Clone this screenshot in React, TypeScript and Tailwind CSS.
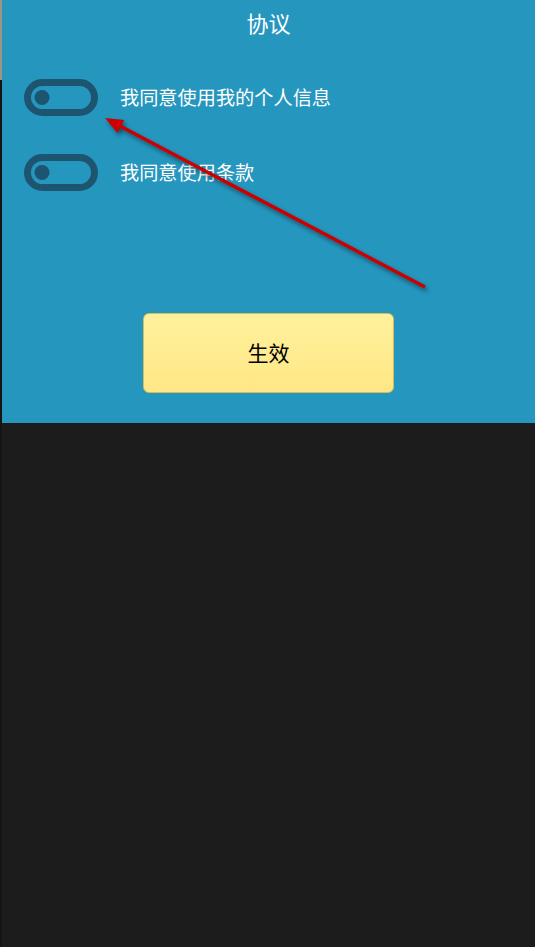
import React from "react";

function Toggle() {
  return (
    <svg width="74" height="37" viewBox="0 0 74 37" className="shrink-0">
      <rect x="3.5" y="3.5" width="67" height="30" rx="15" fill="none" stroke="#1d5570" strokeWidth="7" />
      <circle cx="18" cy="18.5" r="7.5" fill="#1d5570" />
    </svg>
  );
}

function Row({ label }: { label: string }) {
  return (
    <div className="flex items-center h-[37px] pl-[22px]">
      <Toggle />
      <span className="ml-[22px] text-[19.2px] text-white leading-none">{label}</span>
    </div>
  );
}

export default function App() {
  return (
    <div
      className="flex w-full h-[947px] bg-[#1c1c1c] overflow-hidden"
      style={{ fontFamily: '"Noto Sans CJK SC", "Noto Sans", sans-serif' }}
    >
      {/* left edge strip */}
      <div className="flex flex-col w-[2px] shrink-0">
        <div className="h-[80px] bg-[#a09484]" />
        <div className="flex-1 bg-[#141414]" />
      </div>

      <div className="flex-1 flex flex-col">
        <div className="relative h-[423px] bg-[#2596be] flex flex-col">
          <h1 className="pt-[6px] text-center text-[22px] leading-[32px] text-white font-normal">协议</h1>

          <div className="mt-[41px] flex flex-col gap-[38px]">
            <Row label="我同意使用我的个人信息" />
            <Row label="我同意使用条款" />
          </div>

          <div className="mt-[122px] flex justify-center">
            <button className="w-[251px] h-[80px] rounded-[6px] border border-[#d8bd55] bg-gradient-to-b from-[#fff19c] to-[#ffe785] text-[21px] leading-none pb-[2px] text-black">
              生效
            </button>
          </div>

          {/* annotation arrow */}
          <svg
            className="absolute inset-0 w-full h-full pointer-events-none drop-shadow-[2px_3px_2px_rgba(0,0,0,0.45)]"
            viewBox="0 0 533 423"
            preserveAspectRatio="none"
          >
            <line x1="118" y1="126" x2="423" y2="287" stroke="#cc0000" strokeWidth="3.5" />
            <polygon points="103,118 115.6,133 122.2,120" fill="#cc0000" />
          </svg>
        </div>
      </div>
    </div>
  );
}
